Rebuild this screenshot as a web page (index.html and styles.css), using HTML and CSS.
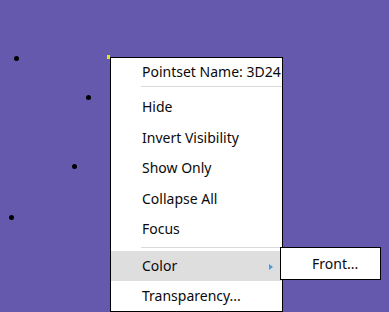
FILE: index.html
```html
<!DOCTYPE html>
<html>
<head>
<meta charset="utf-8">
<link rel="stylesheet" href="styles.css">
</head>
<body>
<div class="canvas">
  <span class="dot" style="left:14px;top:56px"></span>
  <span class="dot" style="left:86px;top:95px"></span>
  <span class="dot" style="left:72px;top:164px"></span>
  <span class="dot" style="left:9px;top:215px"></span>
  <span class="anchor"></span>
  <div class="menu">
    <div class="title">Pointset Name: 3D24</div>
    <div class="sep sep-top"></div>
    <div class="item">Hide</div>
    <div class="item">Invert Visibility</div>
    <div class="item">Show Only</div>
    <div class="item">Collapse All</div>
    <div class="item">Focus</div>
    <div class="sep sep-mid"></div>
    <div class="item item-active">Color<span class="arrow"></span></div>
    <div class="item">Transparency...</div>
  </div>
  <div class="submenu">
    <div class="subitem">Front...</div>
  </div>
</div>
</body>
</html>
```
FILE: styles.css
```css
html, body {
  margin: 0;
  padding: 0;
}
body {
  width: 389px;
  height: 312px;
  overflow: hidden;
  font-family: "Noto Sans", "Open Sans", sans-serif;
}
.canvas {
  position: relative;
  width: 389px;
  height: 312px;
  background: #6559ae;
}
.dot {
  position: absolute;
  width: 5px;
  height: 5px;
  border-radius: 50%;
  background: #000;
}
.anchor {
  position: absolute;
  left: 107px;
  top: 55px;
  width: 3px;
  height: 4px;
  background: #e6e21c;
}
.menu {
  position: absolute;
  left: 110px;
  top: 57px;
  width: 171px;
  background: #fff;
  border: 1px solid #000;
  color: #0a0a0a;
  font-size: 14px;
}
.title {
  height: 28px;
  line-height: 28px;
  padding-left: 31px;
}
.sep {
  height: 1px;
  background: #d9d9d9;
  margin-left: 30px;
}
.sep-top {
  margin-bottom: 5px;
}
.sep-mid {
  margin-top: 2px;
  margin-bottom: 3px;
}
.item {
  position: relative;
  height: 30.5px;
  line-height: 29.5px;
  padding-left: 31px;
}
.item-active {
  height: 30px;
  line-height: 30px;
  background: #dedede;
}
.arrow {
  position: absolute;
  left: 158px;
  top: 13px;
  width: 0;
  height: 0;
  border-top: 3px solid transparent;
  border-bottom: 3px solid transparent;
  border-left: 4px solid #4a9bd6;
}
.submenu {
  position: absolute;
  left: 280px;
  top: 247px;
  width: 99px;
  height: 31px;
  background: #fff;
  border: 1px solid #000;
  color: #0a0a0a;
  font-size: 14px;
}
.subitem {
  line-height: 31px;
  padding-left: 31px;
}
```
